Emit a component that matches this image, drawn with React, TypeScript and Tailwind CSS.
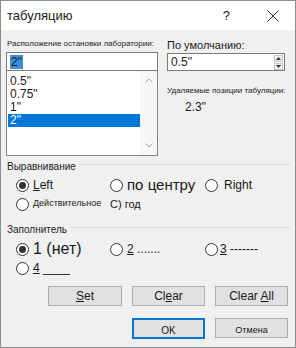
import React from 'react';

const font = { fontFamily: '"Liberation Sans", Arial, sans-serif' };

const Radio = ({ checked = false }: { checked?: boolean }) => (
  <span className="flex h-[13px] w-[13px] shrink-0 items-center justify-center rounded-full border border-[#333333] bg-white">
    {checked && <span className="h-[7px] w-[7px] rounded-full bg-[#333333]" />}
  </span>
);

const GroupLabel = ({ text }: { text: string }) => (
  <div className="flex h-[12px] items-start pr-[5px]">
    <span className="pl-[6px] pr-[3px] text-[10px] leading-[12px] text-[#1a1a1a]">{text}</span>
    <span className="mt-[3px] flex-1 border-t border-[#dcdcdc]" />
  </div>
);

const Button = ({ children, primary = false, w = 'w-[73px]' }: { children: React.ReactNode; primary?: boolean; w?: string }) => (
  <button
    className={`${w} flex items-center justify-center bg-[#e1e1e1] text-[#1a1a1a] ${
      primary ? 'h-[21px] border-2 border-[#0078d7]' : 'h-[20px] border border-[#adadad]'
    }`}
  >
    <span className="whitespace-pre">{children}</span>
  </button>
);

export default function App() {
  const items = ['0.5"', '0.75"', '1"', '2"'];

  return (
    <div style={font} className="flex h-[348px] w-[296px] flex-col border border-[#8c8c8c] bg-[#f0f0f0] text-[#1a1a1a]">
      {/* title bar */}
      <div className="flex h-[29px] items-center bg-white">
        <span className="ml-[6px] text-[13px]">табуляцию</span>
        <span className="ml-auto text-[13px]">?</span>
        <svg className="ml-[37px] mr-[16px]" width="12" height="12" viewBox="0 0 12 12">
          <path d="M0.5 0.5 L11.5 11.5 M11.5 0.5 L0.5 11.5" stroke="#222" strokeWidth="1" />
        </svg>
      </div>

      {/* tab stop position + default */}
      <div className="flex pl-[5px]">
        <div className="flex w-[152px] flex-col pt-[8px]">
          <span className="h-[12px] pl-[1px] text-[8px] leading-[12px] whitespace-nowrap">Расположение остановки лаборатории:</span>
          <div className="mt-[2px] flex h-[19px] items-center border border-[#7a7a7a] bg-white pl-[3px]">
            <span className="bg-[#3d8fd9] px-[1px] text-[12px] leading-[14px] text-[#1a1a1a]">2"</span>
          </div>
          <div className="flex h-[85px] border border-t-0 border-[#828282] bg-white">
            <div className="flex flex-1 flex-col pl-[1px] pt-[4px]">
              {items.map((it, i) => (
                <div
                  key={it}
                  className={`h-[13px] pl-[2px] text-[12px] leading-[13px] ${
                    i === 3 ? 'bg-[#0078d7] text-white' : ''
                  }`}
                >
                  {it}
                </div>
              ))}
            </div>
            <div className="flex w-[17px] flex-col items-center justify-between bg-[#f7f7f7] py-[7px]">
              <svg width="8" height="5" viewBox="0 0 8 5">
                <path d="M0.5 4.5 L4 1 L7.5 4.5" stroke="#a6a6a6" fill="none" strokeWidth="1" />
              </svg>
              <svg width="8" height="5" viewBox="0 0 8 5">
                <path d="M0.5 0.5 L4 4 L7.5 0.5" stroke="#a6a6a6" fill="none" strokeWidth="1" />
              </svg>
            </div>
          </div>
        </div>

        <div className="ml-[9px] flex w-[118px] flex-col pt-[8px]">
          <span className="h-[14px] text-[11px] leading-[14px]">По умолчанию:</span>
          <div className="mt-[1px] flex h-[18px] items-center border border-[#7a7a7a] bg-white pl-[3px]">
            <span className="text-[12px] leading-[14px]">0.5"</span>
            <div className="ml-auto mr-[1px] flex flex-col gap-[1px]">
              <div className="flex h-[7px] w-[9px] items-center justify-center border border-[#c8c8c8] bg-[#f0f0f0]">
                <svg width="5" height="3" viewBox="0 0 5 3"><path d="M0 3 L2.5 0 L5 3 Z" fill="#333" /></svg>
              </div>
              <div className="flex h-[7px] w-[9px] items-center justify-center border border-[#c8c8c8] bg-[#f0f0f0]">
                <svg width="5" height="3" viewBox="0 0 5 3"><path d="M0 0 L2.5 3 L5 0 Z" fill="#333" /></svg>
              </div>
            </div>
          </div>
          <span className="mt-[14px] h-[12px] text-[8px] leading-[12px] whitespace-nowrap">Удаляемые позиции табуляции:</span>
          <span className="mt-[3px] pl-[18px] text-[12px] leading-[14px]">2.3"</span>
        </div>
      </div>

      {/* alignment */}
      <div className="mt-[5px]">
        <GroupLabel text="Выравнивание" />
      </div>
      <div className="mt-[4px] flex h-[16px] items-center pl-[15px]">
        <div className="flex w-[94px] items-center gap-[4px]">
          <Radio checked />
          <span className="text-[12px]"><u>L</u>eft</span>
        </div>
        <div className="flex w-[95px] items-center gap-[4px]">
          <Radio />
          <span className="text-[15px] leading-[16px]">по центру</span>
        </div>
        <div className="flex items-center gap-[6px]">
          <Radio />
          <span className="text-[12px]">Right</span>
        </div>
      </div>
      <div className="mt-[3px] flex h-[16px] items-center pl-[15px]">
        <div className="flex w-[94px] items-center gap-[4px]">
          <Radio />
          <span className="text-[9px] whitespace-nowrap">Действительное</span>
        </div>
        <span className="text-[11px]">С) год</span>
      </div>

      {/* leader */}
      <div className="mt-[12px]">
        <GroupLabel text="Заполнитель" />
      </div>
      <div className="mt-[5px] flex h-[16px] items-center pl-[15px]">
        <div className="flex w-[94px] items-center gap-[4px]">
          <Radio checked />
          <span className="text-[16px] leading-[16px]">1 (нет)</span>
        </div>
        <div className="flex w-[95px] items-center gap-[4px]">
          <Radio />
          <span className="text-[12px]"><u>2</u> .......</span>
        </div>
        <div className="flex items-center gap-[2px]">
          <Radio />
          <span className="text-[12px]"><u>3</u> -------</span>
        </div>
      </div>
      <div className="mt-[3px] flex h-[16px] items-center pl-[15px]">
        <div className="flex items-center gap-[4px]">
          <Radio />
          <span className="text-[12px]"><u>4</u> ____</span>
        </div>
      </div>

      {/* buttons */}
      <div className="mt-[10px] flex justify-end gap-[10px] pr-[7px] text-[12px]">
        <Button w="w-[74px]"><u>S</u>et</Button>
        <Button>Cl<u>e</u>ar</Button>
        <Button>Clear <u>A</u>ll</Button>
      </div>
      <div className="mt-[12px] flex justify-end gap-[10px] pr-[7px]">
        <Button primary><span className="text-[10px]">OK</span></Button>
        <Button><span className="text-[9px]">Отмена</span></Button>
      </div>
    </div>
  );
}
